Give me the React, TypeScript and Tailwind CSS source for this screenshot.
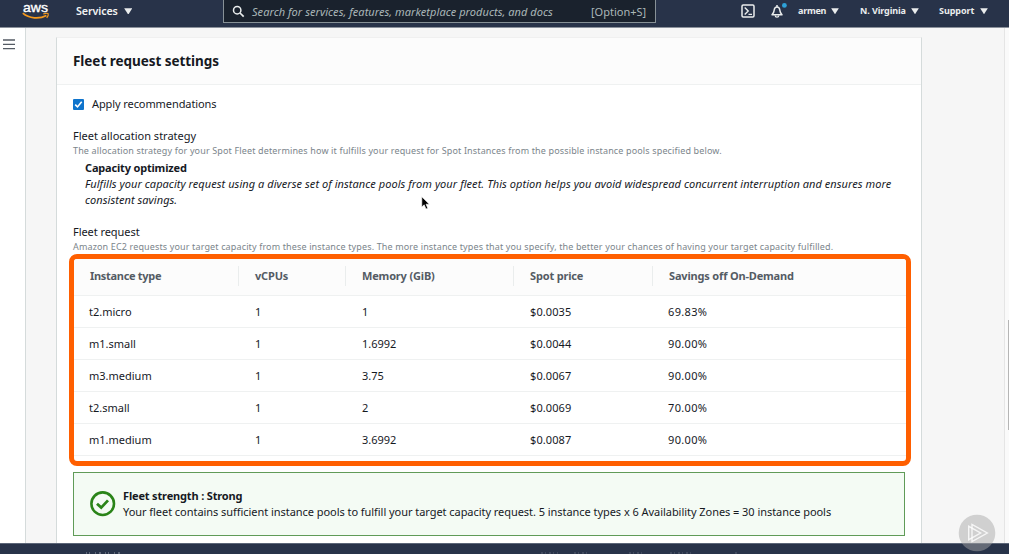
import { type ReactNode } from "react";

const rows = [
  ["t2.micro", "1", "1", "$0.0035", "69.83%"],
  ["m1.small", "1", "1.6992", "$0.0044", "90.00%"],
  ["m3.medium", "1", "3.75", "$0.0067", "90.00%"],
  ["t2.small", "1", "2", "$0.0069", "70.00%"],
  ["m1.medium", "1", "3.6992", "$0.0087", "90.00%"],
];

const cellClass = ["pl-[15px]", "pl-[17px]", "pl-[17px]", "pl-[17px] tracking-[0.1px]", "pl-4 tracking-[0.35px]"];

function Caret({ size }: { size: number }) {
  return (
    <svg width={size} height={size * 0.8} viewBox="0 0 10 8" className="shrink-0">
      <path d="M0.2 0.2h9.6L5 7.9z" fill="#eaeded" />
    </svg>
  );
}

function NavItem({ children, className }: { children: ReactNode; className: string }) {
  return (
    <div className={`flex items-center justify-between whitespace-nowrap text-[9px] font-bold text-[#eaeded] ${className}`}>
      <span>{children}</span>
      <Caret size={8} />
    </div>
  );
}

function TopBar() {
  return (
    <header className="flex h-7 shrink-0 border-b border-[#8b919b] bg-[#283349]">
      <svg width="28" height="21" viewBox="0 0 28 21" className="ml-[22px] shrink-0">
        <text x="1" y="11.8" textLength="25" lengthAdjust="spacingAndGlyphs" fill="#fff" fontFamily="Liberation Sans, sans-serif" fontWeight="400" fontSize="13" stroke="#fff" strokeWidth="0.35">aws</text>
        <path d="M0.8 13.2C7 18.6 17.5 19.4 24.4 15.4" fill="none" stroke="#f79a1c" strokeWidth="1.7" />
        <path d="M21.3 13.8C24 13.1 26 13.2 26.2 13.8C26.5 14.7 25.8 16.5 24.7 17.8" fill="none" stroke="#f79a1c" strokeWidth="1.2" />
      </svg>
      <div className="ml-[26px] flex h-[22px] w-[56px] items-center justify-between text-[10.7px] font-semibold tracking-[-0.1px] text-[#f2f3f3]">
        <span>Services</span>
        <Caret size={8.5} />
      </div>
      <div className="ml-[91px] flex h-[23px] w-[433px] items-center border border-t-0 border-[#879196] bg-[#1a222d] text-[11px] text-[#aab7b8]">
        <svg width="13" height="13" viewBox="0 0 13 13" className="ml-[8px] shrink-0">
          <circle cx="5.2" cy="5.2" r="3.7" fill="none" stroke="#eaeded" strokeWidth="1.5" />
          <path d="M8 8L11.7 11.7" stroke="#eaeded" strokeWidth="1.7" />
        </svg>
        <span className="ml-[7px] w-[339px] whitespace-nowrap pt-px italic tracking-[0.055px]">Search for services, features, marketplace products, and docs</span>
        <span className="whitespace-nowrap pt-px">[Option+S]</span>
      </div>
      <div className="ml-[85px] flex h-[22px] items-center">
        <svg width="14" height="14" viewBox="0 0 14 14" className="shrink-0">
          <rect x="1" y="1" width="12" height="12" rx="1.2" fill="none" stroke="#eaeded" strokeWidth="1.5" />
          <path d="M3.7 3.6L7.2 7L3.7 10.4M7.5 10.4H11" fill="none" stroke="#eaeded" strokeWidth="1.4" />
        </svg>
        <svg width="18" height="16" viewBox="0 0 18 16" className="ml-[15px] shrink-0">
          <path d="M7 2V3.8M2 11.7C4 10 4 8.6 4.2 7C4.5 4.8 5.4 3.9 7 3.9S9.5 4.8 9.8 7C10 8.6 10 10 12 11.7Z" fill="none" stroke="#eaeded" strokeWidth="1.5" strokeLinejoin="round" />
          <path d="M5.2 12.5C5.4 14.7 8.6 14.7 8.8 12.5" fill="none" stroke="#eaeded" strokeWidth="1.4" />
          <circle cx="14.4" cy="2.4" r="2.4" fill="#2ea2d8" />
        </svg>
      </div>
      <NavItem className="ml-[10px] h-[22px] w-[41px] tracking-[-0.25px]">armen</NavItem>
      <NavItem className="ml-[21px] h-[22px] w-[59px] tracking-[-0.1px]">N. Virginia</NavItem>
      <NavItem className="ml-[20px] h-[22px] w-[49px] tracking-[-0.05px]">Support</NavItem>
    </header>
  );
}

function Cursor() {
  return (
    <svg width="10" height="14" viewBox="0 0 10 14" className="absolute left-[421px] top-[196px]">
      <path d="M0.8 0.8V11L3.2 8.8L5 13L6.8 12.2L5 8.2H8.3Z" fill="#000" stroke="#fff" strokeWidth="0.6" />
    </svg>
  );
}

function PlayBadge() {
  return (
    <svg width="38" height="38" viewBox="0 0 38 38" className="absolute left-[958px] top-[514px]">
      <circle cx="19" cy="19" r="18.3" fill="#a8a8a8" fillOpacity="0.48" />
      <g fill="none" stroke="#fff" strokeOpacity="0.8" strokeWidth="1.4">
        <path d="M14 10.5V27.5L29.3 19Z" />
        <path d="M10.7 12.3V25.7L22.6 19Z" />
      </g>
    </svg>
  );
}

const grid = "grid grid-cols-[164px_107px_168px_139px_1fr] items-center";

export default function App() {
  return (
    <div className="relative flex h-[554px] w-[1009px] flex-col overflow-hidden bg-white font-['Noto_Sans',sans-serif] text-[11px] leading-4 text-[#16191f]">
      <TopBar />
      <div className="flex h-[515px] shrink-0">
        <aside className="w-[26px] shrink-0 border-r border-[#d5dbdb] bg-white pl-[3px] pt-[11px]">
          <svg width="12" height="11" viewBox="0 0 12 11">
            <path d="M0 1H12M0 5.3H12M0 9.7H12" stroke="#545b64" strokeWidth="1.3" />
          </svg>
        </aside>
        <main className="flex grow bg-[#f6f6f6] pl-[30px] pt-[9px]">
          <section className="flex w-[866px] shrink-0 flex-col border-x border-t border-[#d5dbdb] border-t-[#f0f0f0] bg-white">
            <h2 className="flex h-[47px] shrink-0 items-center border-b border-[#eff1f1] bg-[#fcfcfc] pl-4 text-[13.5px] font-bold tracking-[-0.04px]">Fleet request settings</h2>
            <div className="flex flex-col whitespace-nowrap pl-4 pt-[11px]">
              <label className="flex h-4 items-center">
                <span className="flex size-[11px] items-center justify-center rounded-[1px] bg-[#0f74cc]">
                  <svg width="9" height="9" viewBox="0 0 9 9"><path d="M1.2 4.6L3.5 6.9L7.7 1.8" fill="none" stroke="#fff" strokeWidth="1.6" /></svg>
                </span>
                <span className="ml-2 tracking-[-0.09px]">Apply recommendations</span>
              </label>
              <div className="mt-4">Fleet allocation strategy</div>
              <div className="-mt-[1px] text-[9px] tracking-[0.141px] text-[#7b858b]">The allocation strategy for your Spot Fleet determines how it fulfills your request for Spot Instances from the possible instance pools specified below.</div>
              <div className="mt-[1px] pl-3 font-bold tracking-[-0.18px]">Capacity optimized</div>
              <div className="pl-3 italic tracking-[0.055px]">Fulfills your capacity request using a diverse set of instance pools from your fleet. This option helps you avoid widespread concurrent interruption and ensures more<br />consistent savings.</div>
              <div className="mt-4 tracking-[-0.06px]">Fleet request</div>
              <div className="-mt-[1px] text-[9px] tracking-[0.138px] text-[#7b858b]">Amazon EC2 requests your target capacity from these instance types. The more instance types that you specify, the better your chances of having your target capacity fulfilled.</div>
            </div>
            <div className="-mt-px ml-3 h-[212px] w-[842px] shrink-0 overflow-hidden rounded-[8px] border-[5px] border-[#ff5f00] bg-white">
              <div className={`${grid} h-[37px] border-b border-[#eff1f1] bg-[#fcfcfc] pb-[3px] font-bold tracking-[-0.17px] text-[#545b64]`}>
                {["Instance type", "vCPUs", "Memory (GiB)", "Spot price", "Savings off On-Demand"].map((h, i) => (
                  <div key={h} className={i ? "h-5 border-l border-[#eaeded] pl-4 leading-5" : "pl-4 tracking-[-0.3px]"}>{h}</div>
                ))}
              </div>
              {rows.map((r) => (
                <div key={r[0]} className={`${grid} h-8 border-b border-[#eff1f1]`}>
                  {r.map((c, i) => <div key={i} className={cellClass[i]}>{c}</div>)}
                </div>
              ))}
            </div>
            <div className="ml-4 mt-[6px] flex h-16 w-[832px] shrink-0 border border-[#609b58] bg-[#f4fbf4] pl-4 pt-[15px]">
              <svg width="26" height="26" viewBox="0 0 26 26" className="mt-[3px] shrink-0">
                <circle cx="12.7" cy="12.7" r="11.3" fill="none" stroke="#2a8418" strokeWidth="2.6" />
                <path d="M7 12.7L11.2 16.6L18 9.4" fill="none" stroke="#2a8418" strokeWidth="2.8" />
              </svg>
              <div className="ml-[7px] whitespace-nowrap">
                <div className="font-bold tracking-[-0.16px]">Fleet strength : Strong</div>
                <div className="tracking-[-0.048px]">Your fleet contains sufficient instance pools to fulfill your target capacity request. 5 instance types x 6 Availability Zones = 30 instance pools</div>
              </div>
            </div>
          </section>
        </main>
        <div className="w-[5px] shrink-0 border-l border-[#e5e5e5] bg-[#fafafa] pl-[3px] pt-[292px]">
          <div className="h-[110px] w-px bg-[#b5b5b5]" />
        </div>
      </div>
      <footer className="flex h-[11px] shrink-0 flex-col justify-end border-t border-[#5c6678] bg-[#283349]">
        <svg width="1009" height="2" viewBox="0 0 1009 2">
          <path d="M86 1H123" stroke="#a2a9b4" strokeOpacity="0.6" strokeWidth="1.4" strokeDasharray="1 2 1 5 1 3 2 4" />
          <path d="M541 1H558M574 1H590M629 1H643M670 1H692M735 1H738" stroke="#a2a9b4" strokeOpacity="0.4" strokeWidth="1.2" strokeDasharray="2 2 1 3" />
        </svg>
      </footer>
      <Cursor />
      <PlayBadge />
    </div>
  );
}
